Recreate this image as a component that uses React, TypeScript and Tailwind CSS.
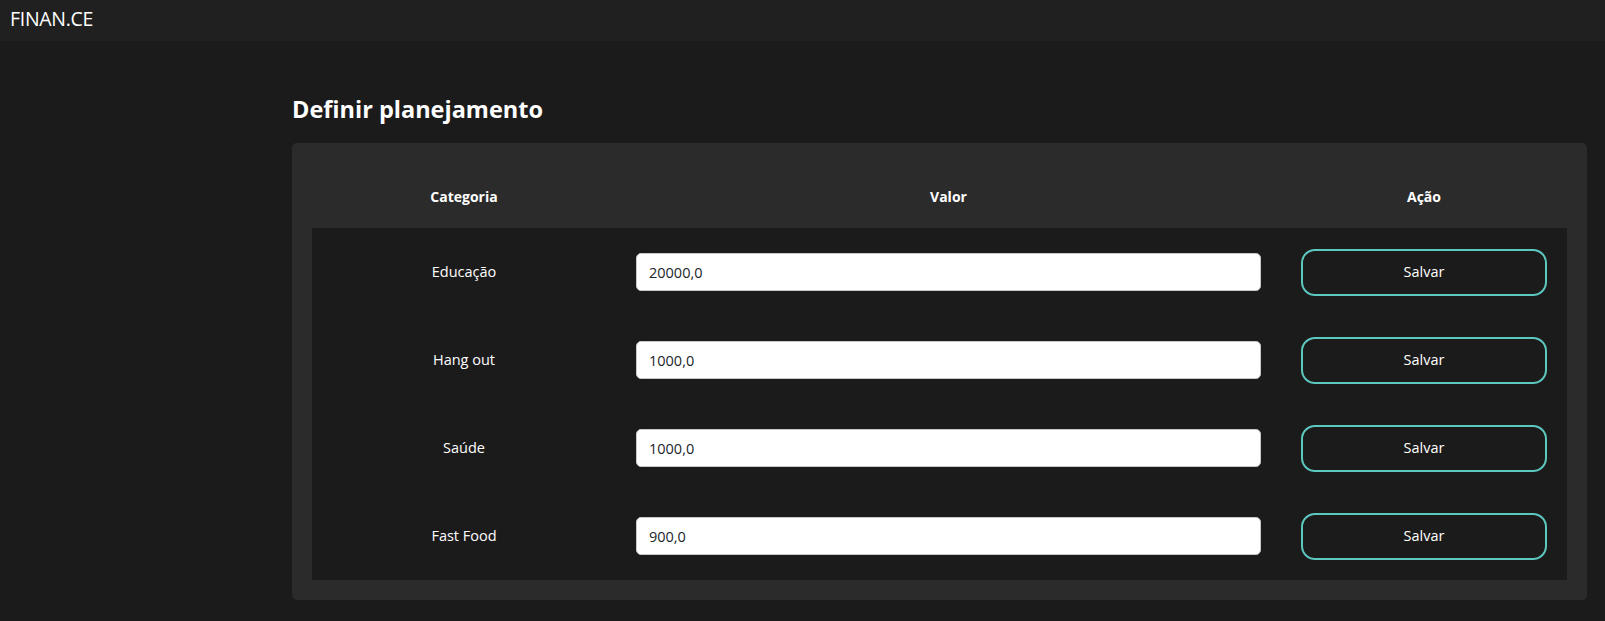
import React, { useState } from 'react';

const rows = [
  { categoria: 'Educação', valor: '20000,0' },
  { categoria: 'Hang out', valor: '1000,0' },
  { categoria: 'Saúde', valor: '1000,0' },
  { categoria: 'Fast Food', valor: '900,0' },
];

function PlanRow({ categoria, valor }: { categoria: string; valor: string }) {
  const [value, setValue] = useState(valor);
  return (
    <div className="grid grid-cols-[304px_665px_1fr] items-center h-[88px]">
      <div className="text-center text-[14.5px] text-white">{categoria}</div>
      <div className="px-5">
        <input
          value={value}
          onChange={(e) => setValue(e.target.value)}
          className="w-full h-[38px] rounded-[5px] border border-[#c8c8c8] bg-white px-3 text-[14.5px] text-[#212529] outline-none"
        />
      </div>
      <div className="px-5">
        <button className="w-full h-[47px] rounded-[14px] border-2 border-[#5cc8bf] bg-transparent text-[14.5px] text-white">
          Salvar
        </button>
      </div>
    </div>
  );
}

export default function App() {
  return (
    <div className="min-h-[621px] bg-[#1c1b1c] font-['Open_Sans','Noto_Sans',sans-serif]">
      {/* Top bar */}
      <header className="h-[41px] bg-[#202020] flex items-center px-[10px] pb-[4px]">
        <span className="text-[19.5px] text-white tracking-[-0.3px]">FINAN.CE</span>
      </header>

      <main className="pl-[292px] pr-[18px]">
        <h1 className="mt-[52px] mb-[18px] text-[23.5px] leading-8 font-bold text-white">Definir planejamento</h1>

        <div className="bg-[#2b2b2b] rounded-[5px] p-5">
          {/* Column titles */}
          <div className="grid grid-cols-[304px_665px_1fr] items-center h-[65px] pt-[2px] text-[14px] font-bold text-white">
            <div className="text-center">Categoria</div>
            <div className="text-center">Valor</div>
            <div className="text-center">Ação</div>
          </div>

          {/* Rows */}
          <div className="bg-[#1c1b1c]">
            {rows.map((r) => (
              <PlanRow key={r.categoria} categoria={r.categoria} valor={r.valor} />
            ))}
          </div>
        </div>
      </main>
    </div>
  );
}
